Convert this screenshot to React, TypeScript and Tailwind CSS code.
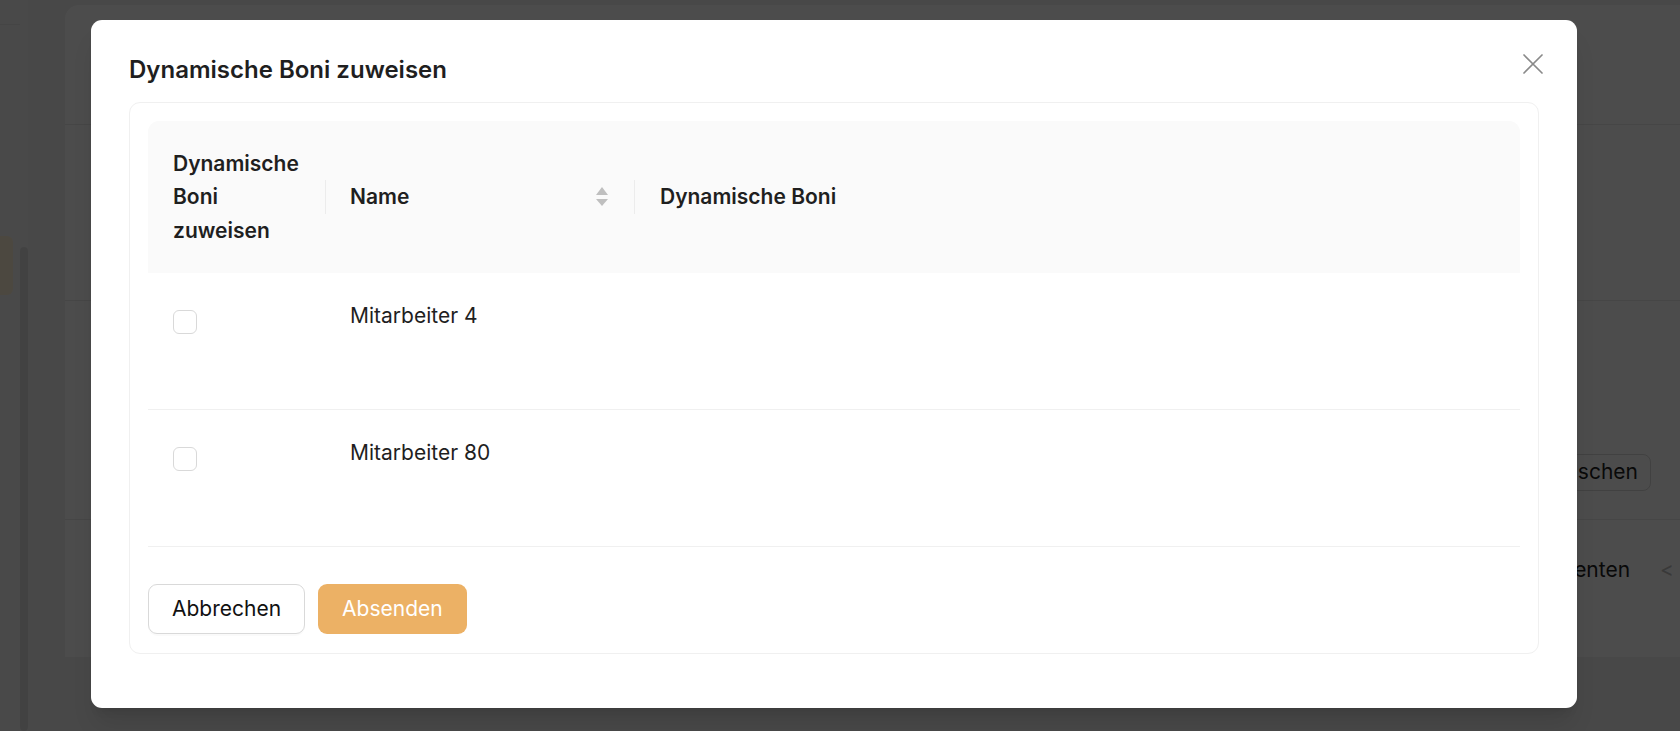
const rows = ["Mitarbeiter 4", "Mitarbeiter 80"]

function SortIcon() {
  return (
    <svg width="12" height="20" viewBox="0 0 12 20" className="text-[#bfbfbf]">
      <path d="M6 0 L12 8 H0 Z" fill="currentColor" />
      <path d="M0 12 H12 L6 19 Z" fill="currentColor" />
    </svg>
  )
}

function CloseIcon() {
  return (
    <svg width="20" height="20" viewBox="0 0 20 20" className="text-[#8a8a8a]">
      <path d="M1 1 L19 19 M19 1 L1 19" stroke="currentColor" strokeWidth="1.7" strokeLinecap="round" />
    </svg>
  )
}

const BackgroundPage = () => {
  return (
    <div className="flex h-full w-full bg-[#f0f0f0]">
      {/* collapsed sidebar */}
      <aside className="flex w-[28px] shrink-0 bg-[#f6f6f6]">
        <div className="flex w-[20px] flex-col">
          <div className="h-[25px] border-b border-[#e6e6e6]" />
          <div className="mt-[211px] h-[59px] w-[13px] rounded-r-md bg-[#fff1d6]" />
        </div>
        <div className="flex w-[8px] flex-col">
          <div className="mt-[247px] flex-1 rounded-full bg-[#dedede]" />
        </div>
      </aside>

      <main className="flex-1 pl-[37px] pt-[5px]">
        <div className="flex h-[652px] flex-col rounded-tl-[14px] bg-white">
          <div className="h-[120px] border-b border-[#ececec]" />
          <div className="h-[176px] border-b border-[#ececec]" />
          <div className="h-[120px]" />
          <div className="flex h-[99px] items-center justify-end border-b border-[#ececec] pr-[29px] pt-[4px]">
            <button className="h-[37px] rounded-[8px] border border-[#d9d9d9] pl-[14px] pr-[12px] text-[21px] text-[#1f1f1f]">
              Löschen
            </button>
          </div>
          <div className="flex h-[100px] items-center justify-end gap-[30px] pr-[6px] text-[21px] text-[#1f1f1f]">
            <span>Insgesamt 2 Elementen</span>
            <span className="text-[#bfbfbf]">&lt;</span>
          </div>
        </div>
      </main>
    </div>
  )
}

const Modal = () => {
  return (
    <div className="relative h-[688px] w-[1486px] rounded-[11px] bg-white px-[38px] pt-[34px] shadow-xl">
      <button className="absolute right-[34px] top-[34px]">
        <CloseIcon />
      </button>

      <h2 className="text-[24px] font-semibold leading-[32px] text-[#1f1f1f]">Dynamische Boni zuweisen</h2>

      <div className="mt-[16px] rounded-[11px] border border-[#f0f0f0] px-[18px] pb-[19px] pt-[18px]">
        {/* table head */}
        <div className="flex h-[152px] items-center rounded-t-[11px] bg-[#fafafa] text-[21px] font-semibold text-[#1f1f1f]">
          <div className="w-[177px] pl-[25px] leading-[33.5px]">
            <span className="block">Dynamische</span>
            <span className="block">Boni</span>
            <span className="block">zuweisen</span>
          </div>
          <div className="h-[34px] w-px bg-[#ececec]" />
          <div className="flex w-[308px] items-center justify-between pl-[24px] pr-[26px]">
            <span>Name</span>
            <SortIcon />
          </div>
          <div className="h-[34px] w-px bg-[#ececec]" />
          <div className="flex-1 pl-[25px]">Dynamische Boni</div>
        </div>

        {/* table body */}
        {rows.map((name) => (
          <div key={name} className="flex h-[137px] border-b border-[#f0f0f0]">
            <div className="w-[178px] pl-[25px] pt-[37px]">
              <div className="h-[24px] w-[24px] rounded-[6px] border border-[#d9d9d9] bg-white" />
            </div>
            <div className="pl-[24px] pt-[28px] text-[21px] leading-[30px] text-[#1f1f1f]">{name}</div>
          </div>
        ))}

        <div className="mt-[37px] flex gap-[13px]">
          <button className="h-[50px] rounded-[9px] border border-[#d9d9d9] bg-white px-[23px] text-[21px] text-[#111] shadow-[0_2px_0_rgba(0,0,0,0.02)]">
            Abbrechen
          </button>
          <button className="h-[50px] rounded-[9px] bg-[#ecb165] px-[24px] text-[21px] text-white">Absenden</button>
        </div>
      </div>
    </div>
  )
}

export default function App() {
  return (
    <div className="relative h-[731px] w-full overflow-hidden font-[Inter,sans-serif]">
      <BackgroundPage />
      <div className="absolute inset-0 flex items-start bg-black/70 pl-[91px] pt-[20px]">
        <Modal />
      </div>
    </div>
  )
}
